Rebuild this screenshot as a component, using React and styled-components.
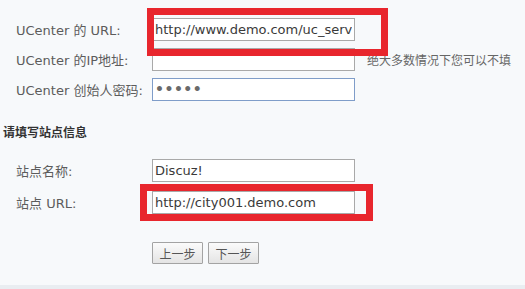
import React from 'react';
import styled, { createGlobalStyle } from 'styled-components';

const Global = createGlobalStyle`
  html, body {
    margin: 0;
    padding: 0;
    background: #e9edf1;
  }
  body {
    font-family: "DejaVu Sans", "Noto Sans CJK SC", sans-serif;
    font-size: 13px;
    color: #555;
  }
`;

const Page = styled.div`
  width: 525px;
  height: 285px;
  background: #f7f9fb;
  overflow: hidden;
`;

const Form = styled.div`
  display: grid;
  grid-template-columns: 152px 204px auto;
  grid-auto-rows: ${p => p.$row}px;
  align-items: center;
  padding-top: ${p => p.$top}px;
`;

const Label = styled.div`
  padding-left: 16px;
  color: #5c5c5c;
  white-space: nowrap;
`;

const Field = styled.div`
  position: relative;
  height: 23px;
`;

const Input = styled.input`
  box-sizing: border-box;
  width: 203px;
  height: 23px;
  margin: 0;
  padding: 0 2px;
  border: 1px solid ${p => (p.$focus ? '#7f9dc9' : '#a9a9a9')};
  background: #fff;
  font-family: "DejaVu Sans", "Noto Sans CJK SC", sans-serif;
  font-size: 13px;
  color: #3a3a3a;
  outline: none;
  &[type='password'] {
    color: #6a6a6a;
    letter-spacing: 0.5px;
    font-size: 14px;
    font-weight: bold;
  }
`;

const Hint = styled.div`
  padding-left: 11px;
  font-size: 12px;
  color: #666;
  white-space: nowrap;
`;

const Heading = styled.h3`
  margin: 0;
  padding: 19px 0 0 3px;
  height: 20px;
  line-height: 20px;
  font-size: 12px;
  font-weight: bold;
  color: #333;
`;

const Mark = styled.div`
  position: absolute;
  box-sizing: border-box;
  border: 7px solid #e8262d;
  pointer-events: none;
  z-index: 2;
`;

const Actions = styled.div`
  display: flex;
  gap: 5px;
  padding: 24px 0 0 152px;
`;

const Button = styled.button`
  box-sizing: border-box;
  width: 51px;
  height: 22px;
  margin: 0;
  padding: 0;
  border: 1px solid #a3a3a3;
  border-radius: 1px;
  background: linear-gradient(#fbfbfb, #e4e4e4);
  font-family: "Noto Sans CJK SC", sans-serif;
  font-size: 12px;
  color: #555;
`;

export default function App() {
  return (
    <Page>
      <Global />
      <Form $row={30} $top={14}>
        <Label>UCenter 的 URL:</Label>
        <Field>
          <Input defaultValue="http://www.demo.com/uc_server" />
          <Mark style={{ left: -5, top: -10, width: 241, height: 48 }} />
        </Field>
        <div />
        <Label>UCenter 的IP地址:</Label>
        <Field>
          <Input defaultValue="" />
        </Field>
        <Hint>绝大多数情况下您可以不填</Hint>
        <Label>UCenter 创始人密码:</Label>
        <Field>
          <Input type="password" defaultValue="*****" $focus />
        </Field>
        <div />
      </Form>
      <Heading>请填写站点信息</Heading>
      <Form $row={32} $top={11}>
        <Label>站点名称:</Label>
        <Field>
          <Input defaultValue="Discuz!" />
        </Field>
        <div />
        <Label>站点 URL:</Label>
        <Field>
          <Input defaultValue="http://city001.demo.com" />
          <Mark style={{ left: -12, top: -7, width: 233, height: 37 }} />
        </Field>
        <div />
      </Form>
      <Actions>
        <Button>上一步</Button>
        <Button>下一步</Button>
      </Actions>
    </Page>
  );
}
